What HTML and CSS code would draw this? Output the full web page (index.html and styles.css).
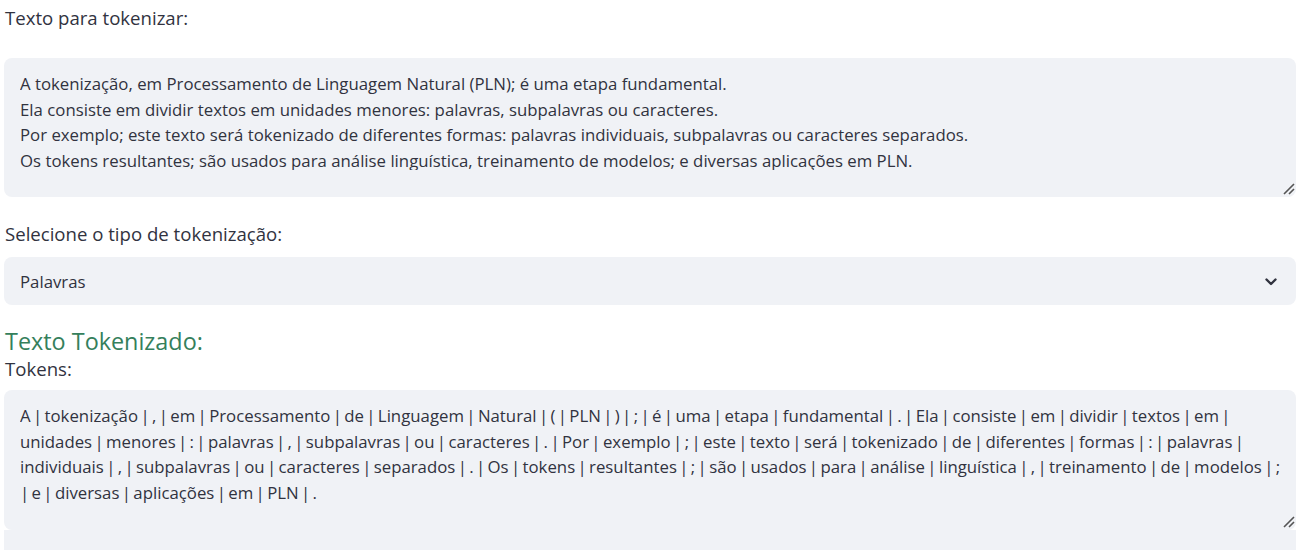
FILE: index.html
```html
<!DOCTYPE html>
<html lang="pt">
<head>
<meta charset="utf-8">
<title>Tokenização</title>
<link rel="stylesheet" href="styles.css">
</head>
<body>
<main class="app">
  <div class="label label-first">Texto para tokenizar:</div>
  <div class="textbox">
    <div class="textbox-content">
      <div class="line">A tokenização, em Processamento de Linguagem Natural (PLN); é uma etapa fundamental.</div>
      <div class="line">Ela consiste em dividir textos em unidades menores: palavras, subpalavras ou caracteres.</div>
      <div class="line">Por exemplo; este texto será tokenizado de diferentes formas: palavras individuais, subpalavras ou caracteres separados.</div>
      <div class="line">Os tokens resultantes; são usados para análise linguística, treinamento de modelos; e diversas aplicações em PLN.</div>
    </div>
    <svg class="resize" width="12" height="12" viewBox="0 0 12 12"><path d="M11 1 L1 11 M11 6 L6 11" stroke="#555" stroke-width="1.6" fill="none"/></svg>
  </div>

  <div class="label label-select">Selecione o tipo de tokenização:</div>
  <div class="select">
    <span class="select-value">Palavras</span>
    <svg class="chevron" width="12" height="8" viewBox="0 0 12 8"><path d="M1.5 1.5 L6 6 L10.5 1.5" stroke="#31333f" stroke-width="2.4" fill="none" stroke-linecap="round" stroke-linejoin="round"/></svg>
  </div>

  <h3 class="heading">Texto Tokenizado:</h3>
  <div class="label label-tokens">Tokens:</div>
  <div class="textbox textbox-tokens">
    <div class="textbox-content">
      <div class="line">A | tokenização | , | em | Processamento | de | Linguagem | Natural | ( | PLN | ) | ; | é | uma | etapa | fundamental | . | Ela | consiste | em | dividir | textos | em |</div>
      <div class="line">unidades | menores | : | palavras | , | subpalavras | ou | caracteres | . | Por | exemplo | ; | este | texto | será | tokenizado | de | diferentes | formas | : | palavras |</div>
      <div class="line">individuais | , | subpalavras | ou | caracteres | separados | . | Os | tokens | resultantes | ; | são | usados | para | análise | linguística | , | treinamento | de | modelos | ;</div>
      <div class="line">| e | diversas | aplicações | em | PLN | .</div>
    </div>
    <svg class="resize" width="12" height="12" viewBox="0 0 12 12"><path d="M11 1 L1 11 M11 6 L6 11" stroke="#555" stroke-width="1.6" fill="none"/></svg>
  </div>
  <div class="next-box"></div>
</main>
</body>
</html>
```
FILE: styles.css
```css
* { box-sizing: border-box; }
html, body { margin: 0; padding: 0; background: #ffffff; }
body {
  font-family: "Open Sans", "Noto Sans", sans-serif;
  color: #31333f;
  overflow: hidden;
}
.app {
  padding: 5px 0 0 4px;
  width: 1296px;
}
.label {
  font-size: 18.6px;
  line-height: 26px;
  height: 26px;
  padding-left: 1px;
  white-space: nowrap;
}
.label-first { margin-bottom: 27px; }
.label-select { margin-top: 24px; margin-bottom: 10px; }
.label-tokens { margin-bottom: 8px; }

.textbox {
  position: relative;
  background: #f0f2f6;
  border-radius: 8px;
  height: 139px;
  padding: 13px 16px 0 16px;
}
.textbox-tokens { height: 140px; }
.textbox-content {
  height: 99px;
  overflow: hidden;
  font-size: 16.8px;
  line-height: 25.6px;
}
.textbox-tokens .textbox-content {
  height: 112px;
  word-spacing: -2px;
}
.line { white-space: nowrap; }
.resize {
  position: absolute;
  right: 1px;
  bottom: 2px;
}
.select {
  height: 48px;
  background: #f0f2f6;
  border-radius: 8px;
  display: flex;
  align-items: center;
  justify-content: space-between;
  padding: 0 19px 0 16px;
  font-size: 16.8px;
}
.chevron { display: block; margin-top: 1px; }
.heading {
  margin: 21px 0 0 0;
  padding-left: 1px;
  font-size: 23.4px;
  line-height: 30px;
  font-weight: 500;
  color: #357f5c;
}
.next-box {
  height: 20px;
  background: #f0f2f6;
}
```
